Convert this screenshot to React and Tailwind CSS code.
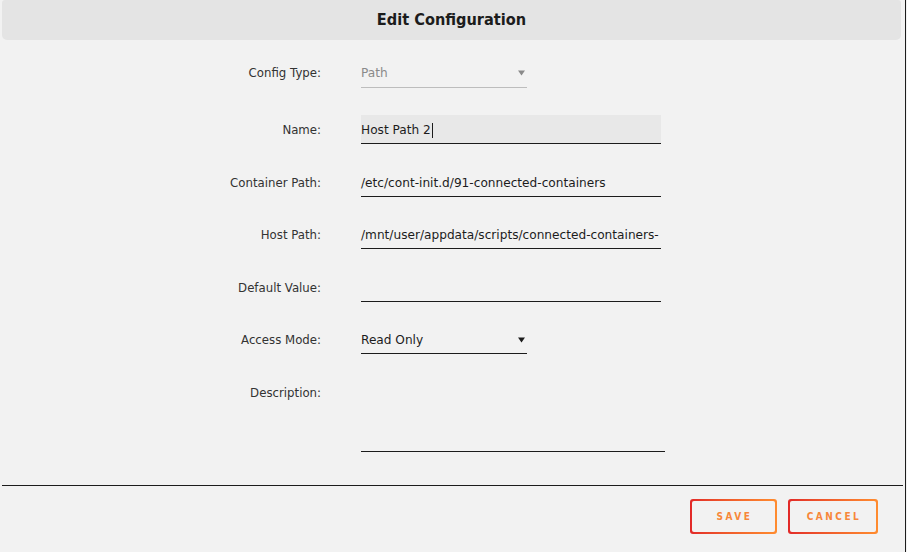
import React from "react";

const Arrow = ({ color }) => (
  <svg width="7" height="6" viewBox="0 0 7 6" className="shrink-0">
    <path d="M0 0.5 H7 L3.5 5.5 Z" fill={color} />
  </svg>
);

const Row = ({ label, className = "", top = false, children }) => (
  <div className={`flex ${top ? "items-start" : "items-center"} ${className}`}>
    <div className={`w-[321px] shrink-0 text-right text-[11.75px] text-[#333] ${top ? "pt-[7px]" : "pt-[2px]"}`}>
      {label}
    </div>
    <div className="ml-[40px]">{children}</div>
  </div>
);

const TextInput = ({ value, filled = false, children }) => (
  <div
    className={`flex h-[29px] w-[300px] items-center border-b border-[#1c1c1c] pt-[2px] text-[12.15px] text-[#1c1c1c] ${
      filled ? "bg-[#e8e8e8]" : ""
    }`}
  >
    <span className="whitespace-nowrap">{value}</span>
    {children}
  </div>
);

export default function App() {
  return (
    <div
      className="flex h-[552px] w-[907px] bg-[#f2f2f2]"
      style={{ fontFamily: '"DejaVu Sans", sans-serif' }}
    >
      <div className="flex w-[906px] flex-col border-r border-[#1c1c1c]">
        {/* header */}
        <div className="ml-[2px] flex h-[40px] w-[899px] items-center justify-center rounded-b-[5px] rounded-t-[3px] bg-[#e4e4e4] pt-[1px]">
          <h1
            className="text-[16.2px] font-bold text-[#1c1c1c]"
            style={{ fontFamily: '"DejaVu Sans Condensed", "DejaVu Sans", sans-serif' }}
          >
            Edit Configuration
          </h1>
        </div>

        {/* form */}
        <div className="flex flex-col">
          <Row label="Config Type:" className="mt-[18px]">
            <div className="flex h-[30px] w-[166px] items-center justify-between border-b border-[#bdbdbd] pr-[2px] pt-[1px] text-[12.15px] text-[#8a8a8a]">
              <span className="pt-[1px]">Path</span>
              <Arrow color="#8a8a8a" />
            </div>
          </Row>

          <Row label="Name:" className="mt-[27px]">
            <TextInput value="Host Path 2" filled>
              <span className="ml-[1px] inline-block h-[15px] w-[1px] bg-[#1c1c1c]" />
            </TextInput>
          </Row>

          <Row label="Container Path:" className="mt-[24px]">
            <TextInput value="/etc/cont-init.d/91-connected-containers" />
          </Row>

          <Row label="Host Path:" className="mt-[23px]">
            <TextInput value="/mnt/user/appdata/scripts/connected-containers-" />
          </Row>

          <Row label="Default Value:" className="mt-[24px]">
            <TextInput value="" />
          </Row>

          <Row label="Access Mode:" className="mt-[23px]">
            <div className="flex h-[29px] w-[166px] items-center justify-between border-b border-[#1c1c1c] pr-[2px] pt-[1px] text-[12.15px] text-[#1c1c1c]">
              <span className="pt-[1px]">Read Only</span>
              <Arrow color="#1c1c1c" />
            </div>
          </Row>

          <Row label="Description:" className="mt-[24px]" top>
            <div className="h-[74px] w-[304px] border-b border-[#1c1c1c]" />
          </Row>
        </div>

        {/* footer */}
        <div className="ml-[2px] mr-[2px] mt-[33px] h-[1px] bg-[#1c1c1c]" />
        <div
          className="mt-[13px] flex justify-end gap-[11px] pr-[27px]"
          style={{ fontFamily: '"DejaVu Sans Condensed", "DejaVu Sans", sans-serif' }}
        >
          {["SAVE", "CANCEL"].map((t) => (
            <button
              key={t}
              className={`rounded-[3px] bg-gradient-to-r from-[#e22828] to-[#ff8c2f] p-[2px] ${
                t === "SAVE" ? "w-[87px]" : "w-[90px]"
              }`}
            >
              <div className="flex h-[31px] items-center justify-center rounded-[2px] bg-[#f2f2f2] pl-[2px] text-[10px] font-bold tracking-[2.5px] text-[#f7873a]">
                {t}
              </div>
            </button>
          ))}
        </div>
      </div>
    </div>
  );
}
